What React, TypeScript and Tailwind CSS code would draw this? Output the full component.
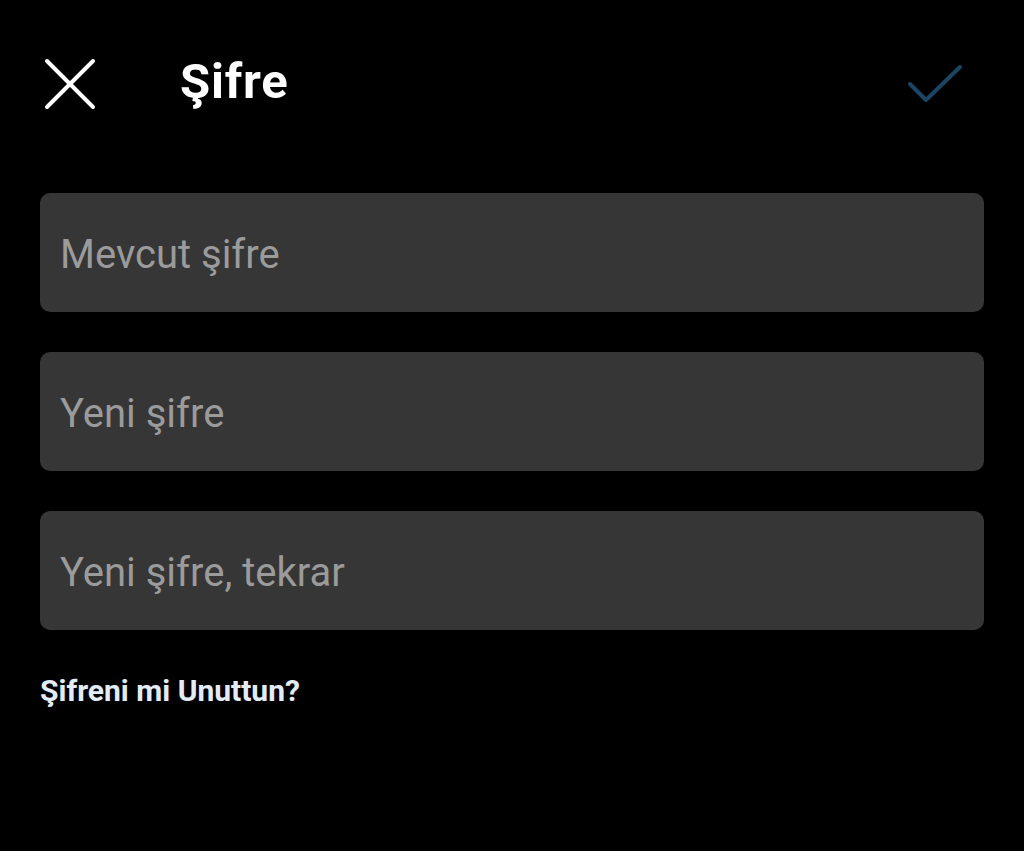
import React from "react";

export default function App() {
  const fields = ["Mevcut şifre", "Yeni şifre", "Yeni şifre, tekrar"];
  return (
    <div
      className="w-[1024px] h-[851px] bg-black overflow-hidden"
      style={{ fontFamily: "Roboto, 'Noto Sans', sans-serif" }}
    >
      <div className="flex items-center h-[83px] mt-[42px] pl-[44px] pr-[60px]">
        <svg width="52" height="52" viewBox="0 0 52 52" className="shrink-0">
          <path d="M3 3 L49 49 M49 3 L3 49" stroke="#ffffff" strokeWidth="4" strokeLinecap="round" />
        </svg>
        <div className="ml-[84px] text-white font-bold text-[49px] tracking-[0.8px] leading-none pb-[4px]">Şifre</div>
        <div className="flex-1" />
        <svg width="58" height="42" viewBox="0 0 58 42" className="shrink-0">
          <path d="M4 21 L20 37 L54 4" stroke="#1b4565" strokeWidth="4" fill="none" strokeLinecap="round" strokeLinejoin="round" />
        </svg>
      </div>
      <div className="flex flex-col gap-[40px] px-[40px] mt-[68px]">
        {fields.map((f) => (
          <div
            key={f}
            className="h-[119px] rounded-[10px] bg-[#363636] flex items-center pl-[20px] pt-[4px] text-[40px] text-[#9b9b9b]"
          >
            {f}
          </div>
        ))}
      </div>
      <div className="px-[40px] mt-[46px] text-[30px] font-bold text-[#e3ecf6] leading-none">
        Şifreni mi Unuttun?
      </div>
    </div>
  );
}
